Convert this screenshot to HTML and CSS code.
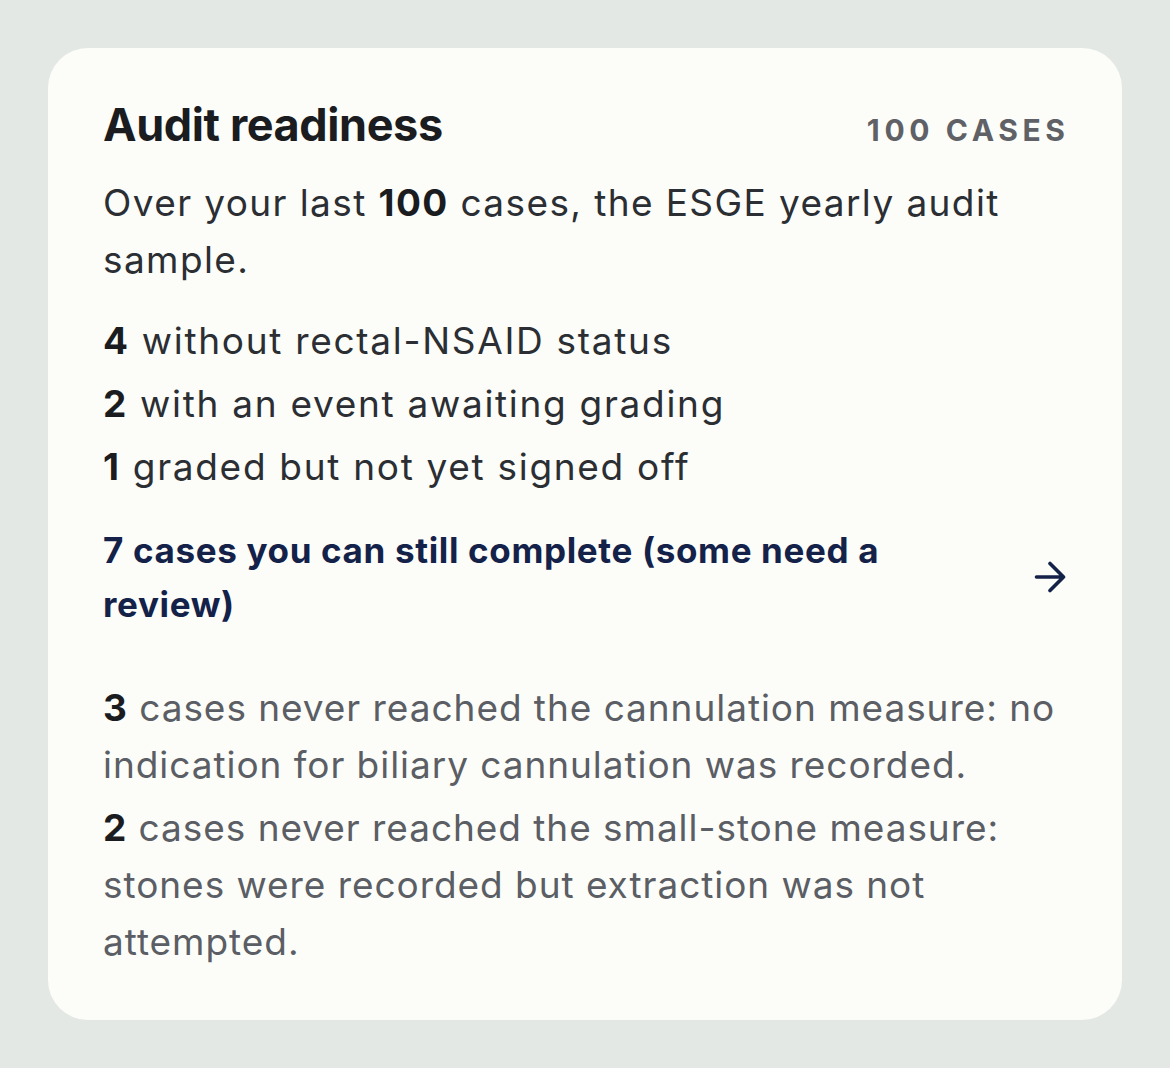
FILE: index.html
```html
<!DOCTYPE html>
<html lang="en">
<head>
<meta charset="utf-8">
<title>Audit readiness</title>
<link rel="stylesheet" href="styles.css">
</head>
<body>
<section class="card">
  <header class="card-head">
    <h2 class="title">Audit readiness</h2>
    <span class="count">100 cases</span>
  </header>
  <p class="intro">Over your last <b>100</b> cases, the ESGE yearly audit sample.</p>
  <ul class="items">
    <li><b>4</b> without rectal-NSAID status</li>
    <li><b>2</b> with an event awaiting grading</li>
    <li><b>1</b> graded but not yet signed off</li>
  </ul>
  <a class="action" href="#">
    <span class="action-text">7 cases you can still complete (some need a review)</span>
    <svg class="arrow" viewBox="0 0 32 32" width="32" height="32" aria-hidden="true"><path d="M2.5 16H29.5M16 2.5L29.5 16L16 29.5" fill="none" stroke="currentColor" stroke-width="3.6" stroke-linecap="round" stroke-linejoin="round"/></svg>
  </a>
  <div class="notes">
    <p><b>3</b> cases never reached the cannulation measure: no indication for biliary cannulation was recorded.</p>
    <p><b>2</b> cases never reached the small-stone measure: stones were recorded but extraction was not attempted.</p>
  </div>
</section>
</body>
</html>
```
FILE: styles.css
```css
html, body {
  margin: 0;
  padding: 0;
}
body {
  background: #e4e8e5;
  font-family: "Inter", "Lato", "Noto Sans", sans-serif;
  padding: 48px;
  box-sizing: border-box;
  width: 1170px;
  height: 1068px;
}
.card {
  background: #fcfdf9;
  border-radius: 40px;
  padding: 49px 55px 50px 55px;
  width: 1074px;
  box-sizing: border-box;
}
.card-head {
  display: flex;
  justify-content: space-between;
  align-items: baseline;
}
.title {
  margin: 0;
  font-size: 45px;
  line-height: 56px;
  font-weight: 700;
  color: #1a1c1f;
  letter-spacing: -0.4px;
}
.count {
  font-size: 30px;
  font-weight: 700;
  letter-spacing: 4.6px;
  margin-right: -2.6px;
  text-transform: uppercase;
  color: #5f6166;
}
.intro {
  margin: 21px 0 0;
  font-size: 37px;
  line-height: 57px;
  color: #2b2e33;
  letter-spacing: 1.4px;
}
.intro b, .items b, .notes b {
  font-weight: 700;
  color: #1a1c1f;
}
.items {
  list-style: none;
  margin: 21px 0 0;
  padding: 0;
  font-size: 37px;
  line-height: 63px;
  color: #2b2e33;
  letter-spacing: 1.7px;
}
.action {
  display: flex;
  align-items: center;
  justify-content: space-between;
  gap: 110px;
  margin-top: 25px;
  text-decoration: none;
  color: #14224a;
}
.action-text {
  flex: 1;
  font-size: 35px;
  line-height: 54px;
  font-weight: 700;
  letter-spacing: 0.65px;
}
.arrow {
  flex: none;
  margin-right: 1px;
  color: #14224a;
}
.notes {
  margin-top: 48px;
  display: flex;
  flex-direction: column;
  gap: 6px;
}
.notes p {
  margin: 0;
  font-size: 37px;
  line-height: 57px;
  color: #5b5e64;
  letter-spacing: 0.95px;
}
```
